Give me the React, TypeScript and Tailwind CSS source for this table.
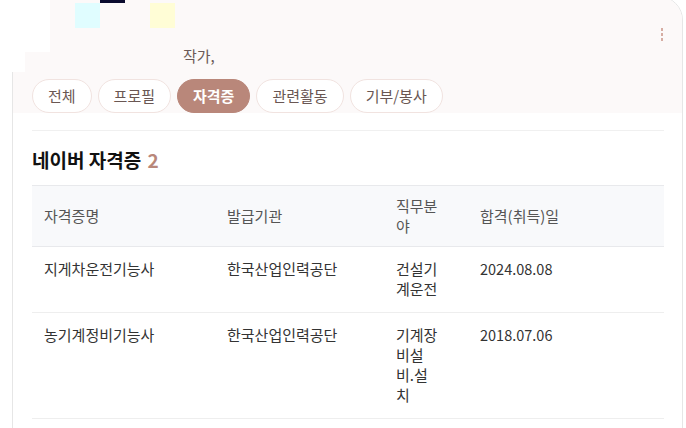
import React from "react";

const tabs = ["전체", "프로필", "자격증", "관련활동", "기부/봉사"];

const rows = [
  { name: "지게차운전기능사", org: "한국산업인력공단", field: "건설기계운전", date: "2024.08.08" },
  { name: "농기계정비기능사", org: "한국산업인력공단", field: "기계장비설비.설치", date: "2018.07.06" },
];

const cols = "grid grid-cols-[183px_169px_84px_1fr]";

const App = () => {
  return (
    <div className="relative w-[686px] h-[428px] overflow-hidden bg-white font-['Noto_Sans_CJK_KR','Noto_Sans',sans-serif] text-[15px] leading-[20px]">
      {/* card */}
      <div className="h-[460px] ml-[12px] mr-[3px] -mt-[4px] border border-[#e6e6e6] rounded-t-[24px] overflow-hidden bg-white">
        <div className="relative bg-[#fcf9f9] pt-[49px]">
          <div className="pl-[170px] text-[#6b5a57]">작가,</div>
          <button className="absolute right-[19px] top-[31px] flex flex-col gap-[2.5px] p-0">
            <span className="block w-[2.5px] h-[2.5px] bg-[#d6ada3]" />
            <span className="block w-[2.5px] h-[2.5px] bg-[#d6ada3]" />
            <span className="block w-[2.5px] h-[2.5px] bg-[#d6ada3]" />
          </button>
          <div className="flex gap-[6px] pl-[19px] mt-[13px]">
            {tabs.map((t) =>
              t === "자격증" ? (
                <span key={t} className="h-[34px] px-[15px] flex items-center rounded-full bg-[#b9877a] border border-[#b9877a] text-white font-bold">
                  {t}
                </span>
              ) : (
                <span key={t} className="h-[34px] px-[15px] flex items-center rounded-full bg-white border border-[#f1e3e0] text-[#6a5753]">
                  {t}
                </span>
              )
            )}
          </div>
        </div>

        <div className="pl-[19px] pr-[18px] pt-[17px]">
          <div className="border-t border-[#f0f0f0]" />
          <h2 className="pt-[16px] pb-[12px] text-[19px] leading-[26px] font-bold text-[#111]">
            네이버 자격증 <span className="ml-[2px] text-[#b9877a]">2</span>
          </h2>

          <div className={`${cols} items-center bg-[#f8f9fb] border-t border-b border-[#e8e9ec] text-[#555] py-[10px]`}>
            <div className="px-3">자격증명</div>
            <div className="px-3">발급기관</div>
            <div className="pl-3"><div className="w-[44px]">직무분야</div></div>
            <div className="px-3">합격(취득)일</div>
          </div>

          {rows.map((r) => (
            <div key={r.name} className={`${cols} items-start border-b border-[#eeeeee] pt-[12px] pb-[13px] text-[#333]`}>
              <div className="px-3">{r.name}</div>
              <div className="px-3">{r.org}</div>
              <div className="pl-3"><div className="w-[44px]">{r.field}</div></div>
              <div className="px-3 text-[14.5px]">{r.date}</div>
            </div>
          ))}
        </div>
      </div>

      {/* overlay bits at the top left */}
      <div className="absolute left-0 top-0 w-[50px] h-[52px] bg-white" />
      <div className="absolute left-0 top-[52px] w-[25px] h-[20px] bg-white" />
      <div className="absolute left-[75px] top-[3px] w-[25px] h-[25px] bg-[#e0fdff]" />
      <div className="absolute left-[100px] top-0 w-[25px] h-[3px] bg-[#0b0b2e]" />
      <div className="absolute left-[150px] top-[3px] w-[25px] h-[25px] bg-[#fffdd6]" />
    </div>
  );
};

export default App;
